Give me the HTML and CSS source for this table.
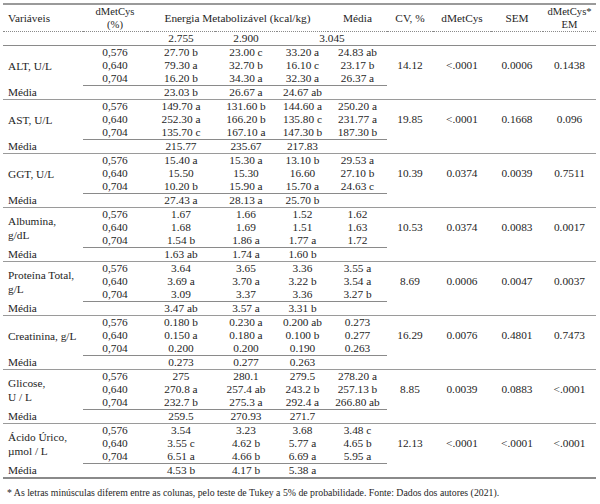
FILE: index.html
```html
<!DOCTYPE html>
<html lang="pt">
<head>
<meta charset="utf-8">
<link rel="stylesheet" href="styles.css">
</head>
<body>
<table class="tbl">
<colgroup>
<col class="c-var"><col class="c-dm"><col class="c-e1"><col class="c-e2"><col class="c-e3"><col class="c-med"><col class="c-cv"><col class="c-p"><col class="c-sem"><col class="c-em">
</colgroup>
<thead>
<tr class="hdr">
<th class="lab">Variáveis</th>
<th class="small">dMetCys<br>(%)</th>
<th colspan="3">Energia Metabolizável (kcal/kg)</th>
<th>Média</th>
<th>CV, %</th>
<th>dMetCys</th>
<th>SEM</th>
<th class="small">dMetCys*<br>EM</th>
</tr>
<tr class="lev">
<td></td><td></td><td>2.755</td><td>2.900</td><td colspan="2" class="e3045">3.045</td><td></td><td></td><td></td><td></td>
</tr>
</thead>
<tbody>
<tr class="r"><td class="lab" rowspan="3">ALT, U/L</td><td>0,576</td><td>27.70 b</td><td>23.00 c</td><td>33.20 a</td><td>24.83 ab</td><td rowspan="3">14.12</td><td rowspan="3">&lt;.0001</td><td rowspan="3">0.0006</td><td rowspan="3">0.1438</td></tr>
<tr class="r"><td>0,640</td><td>79.30 a</td><td>32.70 b</td><td>16.10 c</td><td>23.17 b</td></tr>
<tr class="r"><td>0,704</td><td>16.20 b</td><td>34.30 a</td><td>32.30 a</td><td>26.37 a</td></tr>
<tr class="m"><td class="lab">Média</td><td class="ln"></td><td class="ln">23.03 b</td><td class="ln">26.67 a</td><td class="ln">24.67 ab</td><td class="ln"></td><td></td><td></td><td></td><td></td></tr>

<tr class="r"><td class="lab" rowspan="3">AST, U/L</td><td>0,576</td><td>149.70 a</td><td>131.60 b</td><td>144.60 a</td><td>250.20 a</td><td rowspan="3">19.85</td><td rowspan="3">&lt;.0001</td><td rowspan="3">0.1668</td><td rowspan="3">0.096</td></tr>
<tr class="r"><td>0,640</td><td>252.30 a</td><td>166.20 b</td><td>135.80 c</td><td>231.77 a</td></tr>
<tr class="r"><td>0,704</td><td>135.70 c</td><td>167.10 a</td><td>147.30 b</td><td>187.30 b</td></tr>
<tr class="m"><td class="lab">Média</td><td class="ln"></td><td class="ln">215.77</td><td class="ln">235.67</td><td class="ln">217.83</td><td class="ln"></td><td></td><td></td><td></td><td></td></tr>

<tr class="r"><td class="lab" rowspan="3">GGT, U/L</td><td>0,576</td><td>15.40 a</td><td>15.30 a</td><td>13.10 b</td><td>29.53 a</td><td rowspan="3">10.39</td><td rowspan="3">0.0374</td><td rowspan="3">0.0039</td><td rowspan="3">0.7511</td></tr>
<tr class="r"><td>0,640</td><td>15.50</td><td>15.30</td><td>16.60</td><td>27.10 b</td></tr>
<tr class="r"><td>0,704</td><td>10.20 b</td><td>15.90 a</td><td>15.70 a</td><td>24.63 c</td></tr>
<tr class="m"><td class="lab">Média</td><td class="ln"></td><td class="ln">27.43 a</td><td class="ln">28.13 a</td><td class="ln">25.70 b</td><td class="ln"></td><td></td><td></td><td></td><td></td></tr>

<tr class="r"><td class="lab" rowspan="3">Albumina,<br>g/dL</td><td>0,576</td><td>1.67</td><td>1.66</td><td>1.52</td><td>1.62</td><td rowspan="3">10.53</td><td rowspan="3">0.0374</td><td rowspan="3">0.0083</td><td rowspan="3">0.0017</td></tr>
<tr class="r"><td>0,640</td><td>1.68</td><td>1.69</td><td>1.51</td><td>1.63</td></tr>
<tr class="r"><td>0,704</td><td>1.54 b</td><td>1.86 a</td><td>1.77 a</td><td>1.72</td></tr>
<tr class="m"><td class="lab">Média</td><td class="ln"></td><td class="ln">1.63 ab</td><td class="ln">1.74 a</td><td class="ln">1.60 b</td><td class="ln"></td><td></td><td></td><td></td><td></td></tr>

<tr class="r"><td class="lab" rowspan="3">Proteína Total,<br>g/L</td><td>0,576</td><td>3.64</td><td>3.65</td><td>3.36</td><td>3.55 a</td><td rowspan="3">8.69</td><td rowspan="3">0.0006</td><td rowspan="3">0.0047</td><td rowspan="3">0.0037</td></tr>
<tr class="r"><td>0,640</td><td>3.69 a</td><td>3.70 a</td><td>3.22 b</td><td>3.54 a</td></tr>
<tr class="r"><td>0,704</td><td>3.09</td><td>3.37</td><td>3.36</td><td>3.27 b</td></tr>
<tr class="m"><td class="lab">Média</td><td class="ln"></td><td class="ln">3.47 ab</td><td class="ln">3.57 a</td><td class="ln">3.31 b</td><td class="ln"></td><td></td><td></td><td></td><td></td></tr>

<tr class="r"><td class="lab" rowspan="3">Creatinina, g/L</td><td>0,576</td><td>0.180 b</td><td>0.230 a</td><td>0.200 ab</td><td>0.273</td><td rowspan="3">16.29</td><td rowspan="3">0.0076</td><td rowspan="3">0.4801</td><td rowspan="3">0.7473</td></tr>
<tr class="r"><td>0,640</td><td>0.150 a</td><td>0.180 a</td><td>0.100 b</td><td>0.277</td></tr>
<tr class="r"><td>0,704</td><td>0.200</td><td>0.200</td><td>0.190</td><td>0.263</td></tr>
<tr class="m"><td class="lab">Média</td><td class="ln"></td><td class="ln">0.273</td><td class="ln">0.277</td><td class="ln">0.263</td><td class="ln"></td><td></td><td></td><td></td><td></td></tr>

<tr class="r"><td class="lab" rowspan="3">Glicose,<br>U / L</td><td>0,576</td><td>275</td><td>280.1</td><td>279.5</td><td>278.20 a</td><td rowspan="3">8.85</td><td rowspan="3">0.0039</td><td rowspan="3">0.0883</td><td rowspan="3">&lt;.0001</td></tr>
<tr class="r"><td>0,640</td><td>270.8 a</td><td>257.4 ab</td><td>243.2 b</td><td>257.13 b</td></tr>
<tr class="r"><td>0,704</td><td>232.7 b</td><td>275.3 a</td><td>292.4 a</td><td>266.80 ab</td></tr>
<tr class="m"><td class="lab">Média</td><td class="ln"></td><td class="ln">259.5</td><td class="ln">270.93</td><td class="ln">271.7</td><td class="ln"></td><td></td><td></td><td></td><td></td></tr>

<tr class="r"><td class="lab" rowspan="3">Ácido Úrico,<br>µmol / L</td><td>0,576</td><td>3.54</td><td>3.23</td><td>3.68</td><td>3.48 c</td><td rowspan="3">12.13</td><td rowspan="3">&lt;.0001</td><td rowspan="3">&lt;.0001</td><td rowspan="3">&lt;.0001</td></tr>
<tr class="r"><td>0,640</td><td>3.55 c</td><td>4.62 b</td><td>5.77 a</td><td>4.65 b</td></tr>
<tr class="r"><td>0,704</td><td>6.51 a</td><td>4.66 b</td><td>6.69 a</td><td>5.95 a</td></tr>
<tr class="m last"><td class="lab">Média</td><td class="ln"></td><td class="ln">4.53 b</td><td class="ln">4.17 b</td><td class="ln">5.38 a</td><td class="ln"></td><td></td><td></td><td></td><td></td></tr>
</tbody>
</table>
<p class="note">* As letras minúsculas diferem entre as colunas, pelo teste de Tukey a 5% de probabilidade. Fonte: Dados dos autores (2021).</p>
</body>
</html>
```
FILE: styles.css
```css
html, body {
  margin: 0;
  padding: 0;
  background: #ffffff;
}
body {
  font-family: "Liberation Serif", "Times New Roman", serif;
  color: #1e1e1e;
  font-size: 11.3px;
}
.tbl {
  margin: 3px 0 0 3px;
  width: 593px;
  table-layout: fixed;
  border-collapse: collapse;
  border-top: 2px solid #9a9a9a;
  border-bottom: 2px solid #8a8a8a;
}
.c-var { width: 80px; }
.c-dm { width: 64px; }
.c-e1 { width: 68px; }
.c-e2 { width: 62px; }
.c-e3 { width: 51px; }
.c-med { width: 59px; }
.c-cv { width: 46px; }
.c-p { width: 58px; }
.c-sem { width: 52px; }
.c-em { width: 53px; }
.tbl th, .tbl td {
  padding: 0;
  text-align: center;
  vertical-align: middle;
  white-space: nowrap;
  font-weight: normal;
  line-height: 11px;
}
.tbl .lab {
  text-align: left;
  padding-left: 5px;
  line-height: 14px;
}
.hdr th {
  height: 24px;
  border-bottom: 1px dotted #8a8a8a;
}
.hdr .small {
  font-size: 10.6px;
  line-height: 13px;
}
.lev td {
  height: 13px;
  border-bottom: 1px solid #8a8a8a;
}
.r td {
  height: 13px;
}
.m td {
  height: 13px;
  border-bottom: 1px solid #9a9a9a;
}
.m td.lab {
  line-height: 11px;
}
.m td.ln {
  border-top: 1px solid #8a8a8a;
}
.m.last td {
  border-bottom: none;
}
.note {
  margin: 8px 0 0 7px;
  font-size: 9.8px;
  line-height: 12px;
}
```
